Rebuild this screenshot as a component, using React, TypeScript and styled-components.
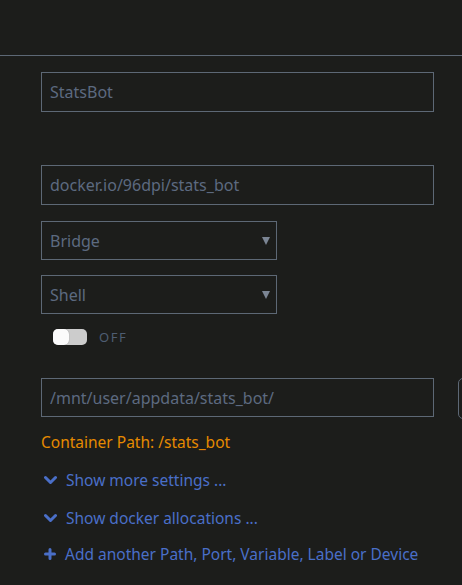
import React, { useState } from 'react';
import styled, { createGlobalStyle } from 'styled-components';

const GlobalStyle = createGlobalStyle`
  html, body {
    margin: 0;
    padding: 0;
    background: #1c1d1b;
    overflow: hidden;
  }
  body {
    font-family: "Noto Sans", "Open Sans", sans-serif;
  }
`;

const Page = styled.div`
  width: 462px;
  height: 585px;
  background: #1c1d1b;
  overflow: hidden;
`;

const Header = styled.div`
  height: 55px;
  border-bottom: 1px solid #5d6875;
`;

const Form = styled.div`
  padding-left: 41px;
  display: flex;
  flex-direction: column;
  align-items: flex-start;
`;

const Row = styled.div<{ $mt: number }>`
  margin-top: ${p => p.$mt}px;
  display: flex;
  align-items: flex-start;
`;

const TextInput = styled.input<{ $h?: number }>`
  box-sizing: border-box;
  width: 393px;
  height: ${p => p.$h || 40}px;
  background: transparent;
  border: 1px solid #5d6875;
  color: #5c6a80;
  font-family: "Noto Sans", sans-serif;
  font-size: 16px;
  padding: 0 8px;
  outline: none;
`;

const SideButton = styled.div`
  box-sizing: border-box;
  margin-left: 24px;
  width: 60px;
  height: 41px;
  border: 1px solid #5d6875;
  border-radius: 5px;
  flex-shrink: 0;
`;

const SelectBox = styled.div`
  box-sizing: border-box;
  position: relative;
  width: 236px;
  height: 39px;
  border: 1px solid #5d6875;
  color: #5c6a80;
  font-size: 16px;
  display: flex;
  align-items: center;
  padding-left: 8px;
`;

const Arrow = styled.span`
  position: absolute;
  right: 6px;
  top: 15px;
  width: 0;
  height: 0;
  border-left: 4px solid transparent;
  border-right: 4px solid transparent;
  border-top: 8px solid #7b8594;
`;

const ToggleRow = styled.div`
  margin-top: 15px;
  margin-left: 12px;
  height: 16px;
  display: flex;
  align-items: center;
  gap: 12px;
`;

const Track = styled.div<{ $on: boolean }>`
  box-sizing: border-box;
  width: 34px;
  height: 16px;
  border-radius: 5px;
  background: ${p => (p.$on ? '#4a6fc8' : '#cccccc')};
  display: flex;
  justify-content: ${p => (p.$on ? 'flex-end' : 'flex-start')};
  cursor: pointer;
`;

const Knob = styled.div`
  width: 16px;
  height: 16px;
  border-radius: 5px;
  background: #fbfbfb;
  box-shadow: 0 0 1px rgba(0, 0, 0, 0.4);
`;

const ToggleLabel = styled.span`
  color: #4e5d72;
  font-size: 13px;
  line-height: 16px;
  letter-spacing: 1.6px;
`;

const Note = styled.div`
  margin-top: 13px;
  color: #e68a00;
  font-size: 15.5px;
  line-height: 20px;
`;

const LinkRow = styled.div<{ $mt: number }>`
  margin-top: ${p => p.$mt}px;
  margin-left: 3px;
  height: 20px;
  display: flex;
  align-items: center;
  gap: 9px;
  color: #4a6fc8;
  font-size: 15.5px;
  line-height: 20px;
  cursor: pointer;
`;

const Chevron = () => (
  <svg width="13" height="10" viewBox="0 0 13 10">
    <path d="M1.5 2.5 L6.5 7.5 L11.5 2.5" fill="none" stroke="#4a6fc8" strokeWidth="3" strokeLinecap="round" strokeLinejoin="round" />
  </svg>
);

const Plus = () => (
  <svg width="12" height="12" viewBox="0 0 12 12">
    <path d="M6 1.5 V10.5 M1.5 6 H10.5" fill="none" stroke="#4a6fc8" strokeWidth="3" strokeLinecap="round" />
  </svg>
);

export default function App() {
  const [on, setOn] = useState(false);

  return (
    <Page>
      <GlobalStyle />
      <Header />
      <Form>
        <Row $mt={16}>
          <TextInput defaultValue="StatsBot" />
        </Row>
        <Row $mt={53}>
          <TextInput defaultValue="docker.io/96dpi/stats_bot" />
        </Row>
        <Row $mt={16}>
          <SelectBox>
            Bridge
            <Arrow />
          </SelectBox>
        </Row>
        <Row $mt={15}>
          <SelectBox>
            Shell
            <Arrow />
          </SelectBox>
        </Row>
        <ToggleRow onClick={() => setOn(!on)}>
          <Track $on={on}>
            <Knob />
          </Track>
          <ToggleLabel>{on ? 'ON' : 'OFF'}</ToggleLabel>
        </ToggleRow>
        <Row $mt={33}>
          <TextInput $h={39} defaultValue="/mnt/user/appdata/stats_bot/" />
          <SideButton />
        </Row>
        <Note>Container Path: /stats_bot</Note>
        <LinkRow $mt={18}>
          <Chevron />
          Show more settings ...
        </LinkRow>
        <LinkRow $mt={18}>
          <Chevron />
          Show docker allocations ...
        </LinkRow>
        <LinkRow $mt={16}>
          <Plus />
          Add another Path, Port, Variable, Label or Device
        </LinkRow>
      </Form>
    </Page>
  );
}
